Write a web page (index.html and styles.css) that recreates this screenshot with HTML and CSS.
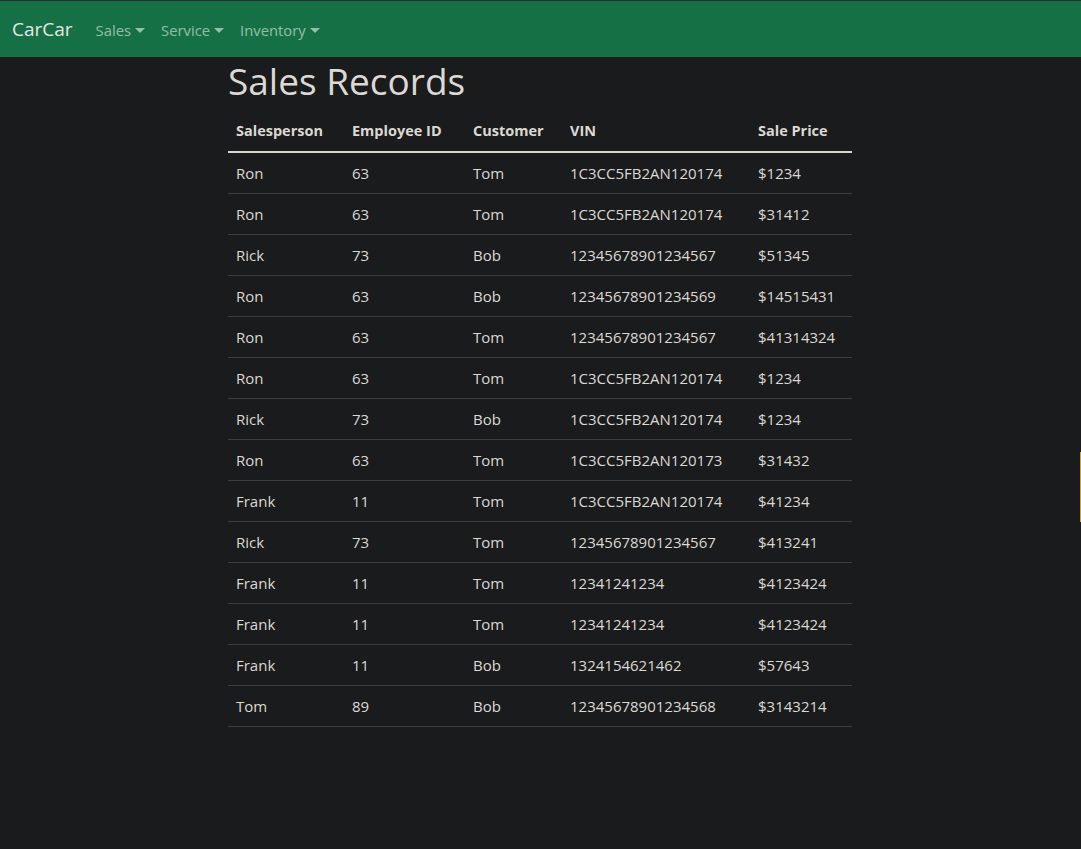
FILE: index.html
```html
<!DOCTYPE html>
<html lang="en">
<head>
<meta charset="utf-8">
<title>CarCar</title>
<link rel="stylesheet" href="styles.css">
</head>
<body>
<nav class="navbar">
  <a class="brand" href="#">CarCar</a>
  <ul class="nav">
    <li><a class="nav-link dropdown" href="#">Sales</a></li>
    <li><a class="nav-link dropdown" href="#">Service</a></li>
    <li><a class="nav-link dropdown" href="#">Inventory</a></li>
  </ul>
</nav>
<main class="content">
  <h1 class="title">Sales Records</h1>
  <table class="records">
    <thead>
      <tr>
        <th class="c1">Salesperson</th>
        <th class="c2">Employee ID</th>
        <th class="c3">Customer</th>
        <th class="c4">VIN</th>
        <th class="c5">Sale Price</th>
      </tr>
    </thead>
    <tbody>
      <tr><td>Ron</td><td>63</td><td>Tom</td><td>1C3CC5FB2AN120174</td><td>$1234</td></tr>
      <tr><td>Ron</td><td>63</td><td>Tom</td><td>1C3CC5FB2AN120174</td><td>$31412</td></tr>
      <tr><td>Rick</td><td>73</td><td>Bob</td><td>12345678901234567</td><td>$51345</td></tr>
      <tr><td>Ron</td><td>63</td><td>Bob</td><td>12345678901234569</td><td>$14515431</td></tr>
      <tr><td>Ron</td><td>63</td><td>Tom</td><td>12345678901234567</td><td>$41314324</td></tr>
      <tr><td>Ron</td><td>63</td><td>Tom</td><td>1C3CC5FB2AN120174</td><td>$1234</td></tr>
      <tr><td>Rick</td><td>73</td><td>Bob</td><td>1C3CC5FB2AN120174</td><td>$1234</td></tr>
      <tr><td>Ron</td><td>63</td><td>Tom</td><td>1C3CC5FB2AN120173</td><td>$31432</td></tr>
      <tr><td>Frank</td><td>11</td><td>Tom</td><td>1C3CC5FB2AN120174</td><td>$41234</td></tr>
      <tr><td>Rick</td><td>73</td><td>Tom</td><td>12345678901234567</td><td>$413241</td></tr>
      <tr><td>Frank</td><td>11</td><td>Tom</td><td>12341241234</td><td>$4123424</td></tr>
      <tr><td>Frank</td><td>11</td><td>Tom</td><td>12341241234</td><td>$4123424</td></tr>
      <tr><td>Frank</td><td>11</td><td>Bob</td><td>1324154621462</td><td>$57643</td></tr>
      <tr><td>Tom</td><td>89</td><td>Bob</td><td>12345678901234568</td><td>$3143214</td></tr>
    </tbody>
  </table>
</main>
<div class="edge-marker"></div>
</body>
</html>
```
FILE: styles.css
```css
* { box-sizing: border-box; }
html, body {
  margin: 0;
  padding: 0;
  background: #1a1b1d;
  height: 100%;
}
body {
  font-family: "Open Sans", "Noto Sans", "Liberation Sans", sans-serif;
  font-size: 15px;
  line-height: 24px;
  color: #dcd8d2;
  position: relative;
  overflow: hidden;
}
a { text-decoration: none; }

.navbar {
  display: flex;
  align-items: center;
  height: 57px;
  background: #167046;
  border-top: 1px solid #2a2c2e;
  padding: 0 12px;
}
.brand {
  color: #e8e6e3;
  font-size: 19px;
  line-height: 30px;
  margin-right: 15px;
}
.nav {
  display: flex;
  list-style: none;
  margin: 0;
  padding: 0;
}
.nav-link {
  display: block;
  padding: 9px 8px 7px;
  color: rgba(225, 240, 230, 0.62);
  font-size: 14.8px;
}
.dropdown::after {
  content: "";
  display: inline-block;
  margin-left: 4px;
  vertical-align: 3px;
  border-top: 5px solid currentColor;
  border-left: 5px solid transparent;
  border-right: 5px solid transparent;
}

.content {
  width: 624px;
  margin-left: calc(50% - 312.5px);
}
.title {
  margin: 0 0 6px;
  font-size: 37px;
  line-height: 48px;
  font-weight: 500;
  color: #dcd8d2;
}
.records {
  width: 624px;
  border-collapse: collapse;
  table-layout: fixed;
}
.records th,
.records td {
  text-align: left;
  padding: 8px;
  line-height: 24px;
  white-space: nowrap;
}
.records th {
  font-weight: 700;
  font-size: 14.5px;
  border-bottom: 2px solid #d8d4cf;
}
.records td {
  border-bottom: 1px solid #3b3e40;
}
.c1 { width: 116px; }
.c2 { width: 121px; }
.c3 { width: 97px; }
.c4 { width: 188px; }
.c5 { width: 102px; }

.edge-marker {
  position: absolute;
  right: 0;
  top: 452px;
  width: 1px;
  height: 70px;
  background: #d6a62c;
}
```
